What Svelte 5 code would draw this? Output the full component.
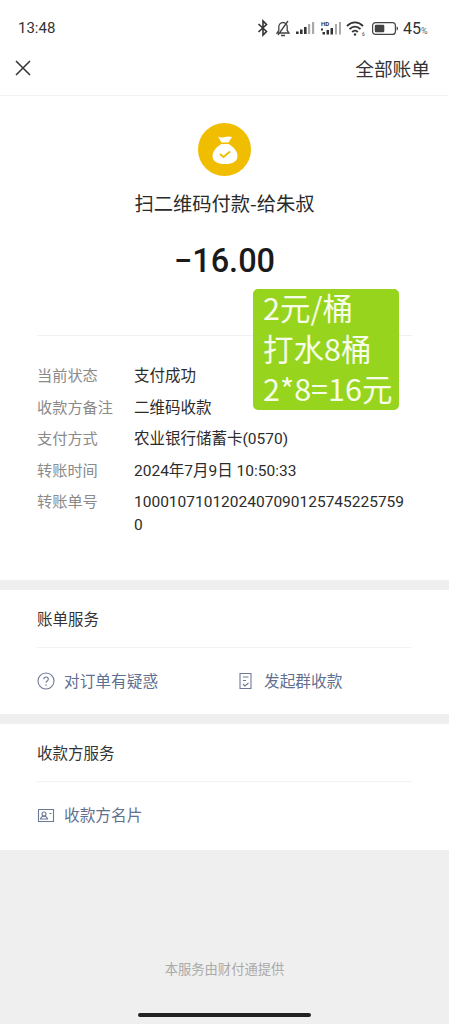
<script>
    const details = [
        { label: '当前状态', value: '支付成功' },
        { label: '收款方备注', value: '二维码收款' },
        { label: '支付方式', value: '农业银行储蓄卡(0570)' },
        { label: '转账时间', value: '2024年7月9日 10:50:33' },
        { label: '转账单号', value: '10001071012024070901257452257590' }
    ];
</script>

<div class="page">
    <div class="status">
        <span class="time">13:48</span>
        <div class="status-icons">
            <svg width="12" height="18" viewBox="0 0 12 18" fill="none" stroke="#333" stroke-width="1.6"><path d="M1.500 5l8 7.500L6 16V2l3.500 3.500-8 7.500"/></svg>
            <svg width="16" height="18" viewBox="0 0 16 18" fill="none" stroke="#444" stroke-width="1.300"><path d="M2 14h12l-1.800-2.500V8A4.200 4.200 0 0 0 8 3.500 4.200 4.200 0 0 0 3.800 8v3.500zM6 16.500h4M3 16L13 2"/></svg>
            <svg width="19" height="14" viewBox="0 0 19 14"><path fill="#333" d="M0 10.500h2.600V13H0zM4 8.500h2.600V13H4zM8 6h2.600v7H8z"/><path fill="#aaa" d="M12 3h2.200v10H12zM16 1h2.200v12H16z"/></svg>
            <svg width="20" height="16" viewBox="0 0 20 16"><text x="0" y="6" class="hd">HD</text><path fill="#333" d="M0 8.500h2v2H0zM1.500 12h2.500v2.500H1.500zM5.500 10h2.500v4.500H5.500zM9.500 8h2.500v6.500H9.500z"/><path fill="#aaa" d="M14 4h2v10.500h-2zM18 2h2v12.500h-2z"/></svg>
            <svg width="20" height="16" viewBox="0 0 20 16" fill="none" stroke="#333" stroke-width="1.900"><path d="M1 6c4.800-4.800 11.200-4.800 16 0M3.500 9.200c3.400-3.400 7.600-3.400 11 0M6.200 12c1.800-1.800 3.800-1.800 5.600 0"/><circle cx="9" cy="14.500" r="1.200" fill="#333" stroke="none"/><text x="16" y="15.500" class="six">6</text></svg>
            <svg width="26" height="13" viewBox="0 0 26 13"><rect x=".6" y=".6" width="22.800" height="11.800" rx="3" fill="none" stroke="#444" stroke-width="1.200"/><rect x="2.800" y="2.800" width="9.500" height="7.400" rx="1.200" fill="#444"/><path d="M24.600 4.500c1 .3 1.400 1 1.400 2s-.4 1.700-1.400 2z" fill="#444"/></svg>
            <span class="pct">45<small>%</small></span>
        </div>
    </div>

    <header class="nav">
        <svg width="18" height="18" viewBox="0 0 18 18" stroke="#333" stroke-width="1.500"><path d="M2 2l14 14M16 2L2 16"/></svg>
        <span class="all">全部账单</span>
    </header>

    <section class="summary">
        <div class="coin">
            <svg width="30" height="32" viewBox="0 0 30 32">
                <path fill="#fff" d="M8 2.500c2.500 1 4.500 1.200 7 .5 2.500-.7 4.500-.8 7 0L18.500 8.500h-7z"/>
                <path fill="#fff" d="M11.500 10h7c4.500 2.500 9 7 9 12 0 5.500-5 8-12.500 8S2.500 27.500 2.500 22c0-5 4.500-9.500 9-12z"/>
                <path fill="none" stroke="#f0bd00" stroke-width="1.900" d="M10 20l3.500 3 6.500-5.500"/>
            </svg>
        </div>
        <div class="payee">扫二维码付款-给朱叔</div>
        <div class="amount">−16.00</div>
        <div class="note"><div class="note-text">2元/桶<br>打水8桶<br>2*8=16元</div></div>
    </section>

    <section class="details">
        {#each details as d}
            <div class="row">
                <span class="label">{d.label}</span>
                <span class="value">{d.value}</span>
            </div>
        {/each}
    </section>

    <div class="band"></div>

    <section class="service">
        <div class="service-title">账单服务</div>
        <div class="links">
            <div class="link">
                <svg width="18" height="18" viewBox="0 0 18 18" fill="none" stroke="#6d7a96" stroke-width="1.100"><circle cx="9" cy="9" r="8"/><path d="M6.800 7.200c0-3 4.500-3 4.500 0 0 1.800-2.300 1.800-2.300 3.500"/><circle cx="9" cy="13" r=".8" fill="#6d7a96" stroke="none"/></svg>
                <span>对订单有疑惑</span>
            </div>
            <div class="link">
                <svg width="18" height="18" viewBox="0 0 18 18" fill="none" stroke="#6d7a96" stroke-width="1.100"><path d="M3 1.500h11v15H3zM6 5h5.500M6 8.500h3M6 12l2 2 3.500-3"/></svg>
                <span>发起群收款</span>
            </div>
        </div>
    </section>

    <div class="band"></div>

    <section class="service last">
        <div class="service-title">收款方服务</div>
        <div class="links">
            <div class="link">
                <svg width="18" height="18" viewBox="0 0 18 18" fill="none" stroke="#6d7a96" stroke-width="1.100"><path d="M1.500 3.500h15v12h-15z"/><circle cx="7" cy="8" r="2"/><path d="M3.500 13c.5-2 2-2.800 3.500-2.800s3 .8 3.500 2.800zM12.500 7.500h2"/></svg>
                <span>收款方名片</span>
            </div>
        </div>
    </section>

    <footer class="foot">
        <span>本服务由财付通提供</span>
        <div class="home-bar"></div>
    </footer>
</div>

<style>
    :global(body) {
        margin: 0;
        background: #fff;
    }
    .page {
        position: relative;
        width: 449px;
        height: 1024px;
        overflow: hidden;
        display: flex;
        flex-direction: column;
        font-family: "Noto Sans CJK SC", Roboto, sans-serif;
        color: #222;
    }
    .status {
        height: 48px;
        flex: none;
        box-sizing: border-box;
        padding: 8px 20px 0 18px;
        display: flex;
        align-items: center;
        justify-content: space-between;
    }
    .time {
        font-family: Roboto, sans-serif;
        font-size: 15px;
        color: #333;
    }
    .status-icons {
        display: flex;
        align-items: center;
        gap: 5.500px;
    }
    .hd {
        font-family: Roboto, sans-serif;
        font-size: 6px;
        font-weight: 700;
        fill: #333;
    }
    .six {
        font-family: Roboto, sans-serif;
        font-size: 5px;
        fill: #333;
        stroke: none;
    }
    .pct {
        width: 26px;
        font-family: Roboto, sans-serif;
        font-size: 16px;
        color: #333;
        white-space: nowrap;
    }
    .pct small {
        font-size: 9px;
        color: #666;
    }
    .nav {
        height: 48px;
        flex: none;
        box-sizing: border-box;
        padding: 0 19px 8px 14px;
        display: flex;
        align-items: center;
        justify-content: space-between;
        border-bottom: 1px solid #f3f3f3;
    }
    .all {
        font-size: 18.700px;
        color: #333;
    }
    .summary {
        position: relative;
        height: 240px;
        flex: none;
        box-sizing: border-box;
        margin: 0 37px;
        padding-top: 27px;
        border-bottom: 1px solid #f0f0f0;
        display: flex;
        flex-direction: column;
        align-items: center;
    }
    .coin {
        width: 53px;
        height: 53px;
        border-radius: 50%;
        background: #f0bd00;
        display: flex;
        align-items: center;
        justify-content: center;
    }
    .payee {
        margin-top: 14px;
        font-size: 19.300px;
        line-height: 26px;
        color: #2a2a2a;
    }
    .amount {
        margin-top: 23px;
        font-family: Roboto, sans-serif;
        font-size: 32.500px;
        font-weight: 500;
        line-height: 44px;
        color: #1a1a1a;
    }
    .note {
        position: absolute;
        left: 216px;
        top: 193px;
        width: 146px;
        height: 121px;
        box-sizing: border-box;
        padding-left: 10px;
        border-radius: 5px;
        background: #96d41e;
        color: #f6fde8;
        font-size: 30.500px;
        line-height: 40.500px;
        white-space: nowrap;
    }
    .note-text {
        margin-top: -2px;
    }
    .details {
        height: 244px;
        flex: none;
        box-sizing: border-box;
        padding: 27px 43px 0 37px;
    }
    .row {
        display: flex;
        align-items: baseline;
        min-height: 31.500px;
        font-size: 15.200px;
        line-height: 23px;
    }
    .label {
        width: 97px;
        flex: none;
        color: #8a8a8a;
    }
    .value {
        flex: 1;
        min-width: 0;
        color: #2c2c2c;
        word-break: break-all;
        font-family: Roboto, "Noto Sans CJK SC", sans-serif;
        font-size: 15.500px;
    }
    .band {
        height: 10px;
        flex: none;
        background: #efefef;
    }
    .service {
        height: 124px;
        flex: none;
        box-sizing: border-box;
        padding: 0 37px;
    }
    .service.last {
        height: 126px;
    }
    .service-title {
        height: 58px;
        box-sizing: border-box;
        border-bottom: 1px solid #f3f3f3;
        padding-top: 17px;
        font-size: 15.500px;
        line-height: 22px;
        color: #333;
    }
    .links {
        display: flex;
        padding-top: 22px;
    }
    .link {
        width: 200px;
        flex: none;
        display: flex;
        align-items: center;
        gap: 9px;
        font-size: 15.700px;
        line-height: 22px;
        color: #5f6f90;
    }
    .foot {
        flex: 1;
        position: relative;
        background: #efefef;
        display: flex;
        justify-content: center;
        padding-top: 109px;
        font-size: 13.300px;
        line-height: 20px;
        color: #aaa;
    }
    .home-bar {
        position: absolute;
        left: 138px;
        bottom: 7px;
        width: 173px;
        height: 4px;
        border-radius: 2px;
        background: #222;
    }
</style>
